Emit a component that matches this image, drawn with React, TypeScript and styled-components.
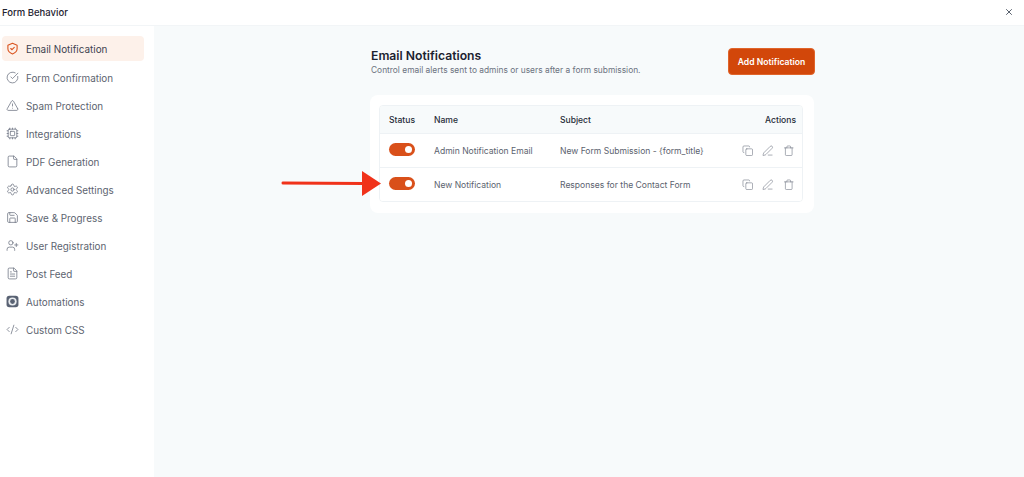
import React from "react";
import styled, { createGlobalStyle } from "styled-components";
import {
  CircleCheckBig,
  TriangleAlert,
  Cpu,
  File,
  Settings,
  Save,
  UserPlus,
  FileText,
  CodeXml,
  Copy,
  PenLine,
  Trash,
  X,
} from "lucide-react";

const Global = createGlobalStyle`
  html, body { margin: 0; padding: 0; background: #fff; }
  body { font-family: Inter, "Liberation Sans", sans-serif; overflow: hidden; }
  * { box-sizing: border-box; }
`;

const Page = styled.div`
  position: relative;
  width: 1024px;
  height: 477px;
  display: flex;
  flex-direction: column;
  background: #fff;
`;

const Header = styled.header`
  height: 26px;
  flex: none;
  display: flex;
  align-items: center;
  justify-content: space-between;
  padding: 0 10px 1px 2px;
  border-bottom: 1px solid #f2f5f7;
`;

const HeaderTitle = styled.div`
  font-size: 9.5px;
  font-weight: 500;
  color: #1f2430;
`;

const Body = styled.div`
  flex: 1;
  display: flex;
  min-height: 0;
`;

const Sidebar = styled.nav`
  width: 154px;
  flex: none;
  padding: 10px 10px 0 2px;
  display: flex;
  flex-direction: column;
  gap: 3px;
`;

const NavItem = styled.div<{ $active?: boolean }>`
  height: 25px;
  display: flex;
  align-items: center;
  gap: 7px;
  padding: ${(p) => (p.$active ? "0" : "2px")} 0 0 4px;
  border-radius: 4px;
  font-size: 9.9px;
  color: ${(p) => (p.$active ? "#3d4350" : "#5d6470")};
  background: ${(p) => (p.$active ? "#fdf1ea" : "transparent")};
  svg {
    flex: none;
    color: ${(p) => (p.$active ? "#d9531e" : "#6b7280")};
  }
`;

const Main = styled.main`
  flex: 1;
  background: #f7fafb;
  padding: 22px 0 0 216px;
`;

const Column = styled.div`
  width: 445px;
  display: flex;
  flex-direction: column;
  gap: 20px;
`;

const TitleRow = styled.div`
  display: flex;
  align-items: center;
  justify-content: space-between;
  height: 27px;
  padding-left: 1px;
`;

const Title = styled.h1`
  margin: 0 0 1px;
  font-size: 12.2px;
  line-height: 15px;
  font-weight: 600;
  color: #1c2230;
`;

const Subtitle = styled.p`
  margin: 0;
  font-size: 8.4px;
  line-height: 12px;
  color: #6b7280;
`;

const AddButton = styled.button`
  width: 87px;
  height: 27px;
  border: 1px solid #e0642a;
  border-radius: 4px;
  background: #d2470a;
  color: #fff;
  font-family: inherit;
  font-size: 8.6px;
  font-weight: 600;
  padding: 0;
`;

const Card = styled.section`
  width: 444px;
  background: #fff;
  border-radius: 8px;
  padding: 10px 11px 11px 9px;
`;

const Table = styled.div`
  border: 1px solid #eef2f5;
  border-radius: 4px;
  overflow: hidden;
`;

const Row = styled.div<{ $head?: boolean }>`
  display: grid;
  grid-template-columns: 45px 126px 1fr auto;
  align-items: center;
  height: ${(p) => (p.$head ? "27px" : "34px")};
  padding: 0 6px 0 9px;
  font-size: 8.55px;
  color: ${(p) => (p.$head ? "#262c38" : "#5b626e")};
  font-weight: ${(p) => (p.$head ? 500 : 400)};
  background: ${(p) => (p.$head ? "#f7fafb" : "#fff")};
  & + & {
    border-top: 1px solid #eef2f5;
  }
`;

const Toggle = styled.span`
  display: block;
  position: relative;
  width: 26px;
  height: 13px;
  margin-top: -3px;
  border-radius: 7px;
  background: #d9501a;
  &::after {
    content: "";
    position: absolute;
    right: 3px;
    top: 3px;
    width: 7px;
    height: 7px;
    border-radius: 50%;
    background: #fff;
  }
`;

const Actions = styled.div`
  display: flex;
  align-items: center;
  gap: 9px;
  padding-right: 2px;
  color: #6b7280;
`;

const Arrow = styled.svg`
  position: absolute;
  left: 280px;
  top: 170px;
`;

const Shield = () => (
  <svg width="13" height="13" viewBox="0 0 24 24" fill="none" stroke="currentColor" strokeWidth="2" strokeLinecap="round" strokeLinejoin="round">
    <path d="M12 2.5 20.5 6v6.5c0 4.5-3.5 7.5-8.5 9.5-5-2-8.5-5-8.5-9.5V6z" />
    <path d="m8.8 12 2.3 2.3 4.2-4.3" />
  </svg>
);

const Automation = () => (
  <svg width="13" height="13" viewBox="0 0 24 24">
    <rect x="1" y="1.5" width="22" height="21" rx="5" fill="#596273" />
    <circle cx="12" cy="12" r="7.6" fill="#e9ecef" />
    <circle cx="12" cy="12" r="4.4" fill="#596273" />
  </svg>
);

const items: { label: string; icon: React.ReactNode }[] = [
  { label: "Email Notification", icon: <Shield /> },
  { label: "Form Confirmation", icon: <CircleCheckBig size={13} strokeWidth={1.4} /> },
  { label: "Spam Protection", icon: <TriangleAlert size={13} strokeWidth={1.4} /> },
  { label: "Integrations", icon: <Cpu size={13} strokeWidth={1.4} /> },
  { label: "PDF Generation", icon: <File size={13} strokeWidth={1.4} /> },
  { label: "Advanced Settings", icon: <Settings size={13} strokeWidth={1.4} /> },
  { label: "Save & Progress", icon: <Save size={13} strokeWidth={1.4} /> },
  { label: "User Registration", icon: <UserPlus size={13} strokeWidth={1.4} /> },
  { label: "Post Feed", icon: <FileText size={13} strokeWidth={1.4} /> },
  { label: "Automations", icon: <Automation /> },
  { label: "Custom CSS", icon: <CodeXml size={13} strokeWidth={1.4} /> },
];

const rows = [
  { name: "Admin Notification Email", subject: "New Form Submission - {form_title}" },
  { name: "New Notification", subject: "Responses for the Contact Form" },
];

export default function App() {
  return (
    <Page>
      <Global />
      <Header>
        <HeaderTitle>Form Behavior</HeaderTitle>
        <X size={10} strokeWidth={2} color="#374151" />
      </Header>
      <Body>
        <Sidebar>
          {items.map((it, i) => (
            <NavItem key={it.label} $active={i === 0}>
              {it.icon}
              {it.label}
            </NavItem>
          ))}
        </Sidebar>
        <Main>
          <Column>
            <TitleRow>
              <div>
                <Title>Email Notifications</Title>
                <Subtitle>Control email alerts sent to admins or users after a form submission.</Subtitle>
              </div>
              <AddButton>Add Notification</AddButton>
            </TitleRow>
            <Card>
              <Table>
                <Row $head>
                  <span>Status</span>
                  <span>Name</span>
                  <span>Subject</span>
                  <span>Actions</span>
                </Row>
                {rows.map((r) => (
                  <Row key={r.name}>
                    <Toggle />
                    <span>{r.name}</span>
                    <span>{r.subject}</span>
                    <Actions>
                      <Copy size={11.5} strokeWidth={1.2} />
                      <PenLine size={11.5} strokeWidth={1.2} />
                      <Trash size={11.5} strokeWidth={1.2} />
                    </Actions>
                  </Row>
                ))}
              </Table>
            </Card>
          </Column>
        </Main>
      </Body>
      <Arrow width="104" height="28" viewBox="0 0 104 28">
        <path d="M3 13 L84 13.4" stroke="#f0321a" strokeWidth="3" strokeLinecap="round" fill="none" />
        <path d="M82 1 L101 13.5 L82 26 Z" fill="#f0321a" />
      </Arrow>
    </Page>
  );
}
